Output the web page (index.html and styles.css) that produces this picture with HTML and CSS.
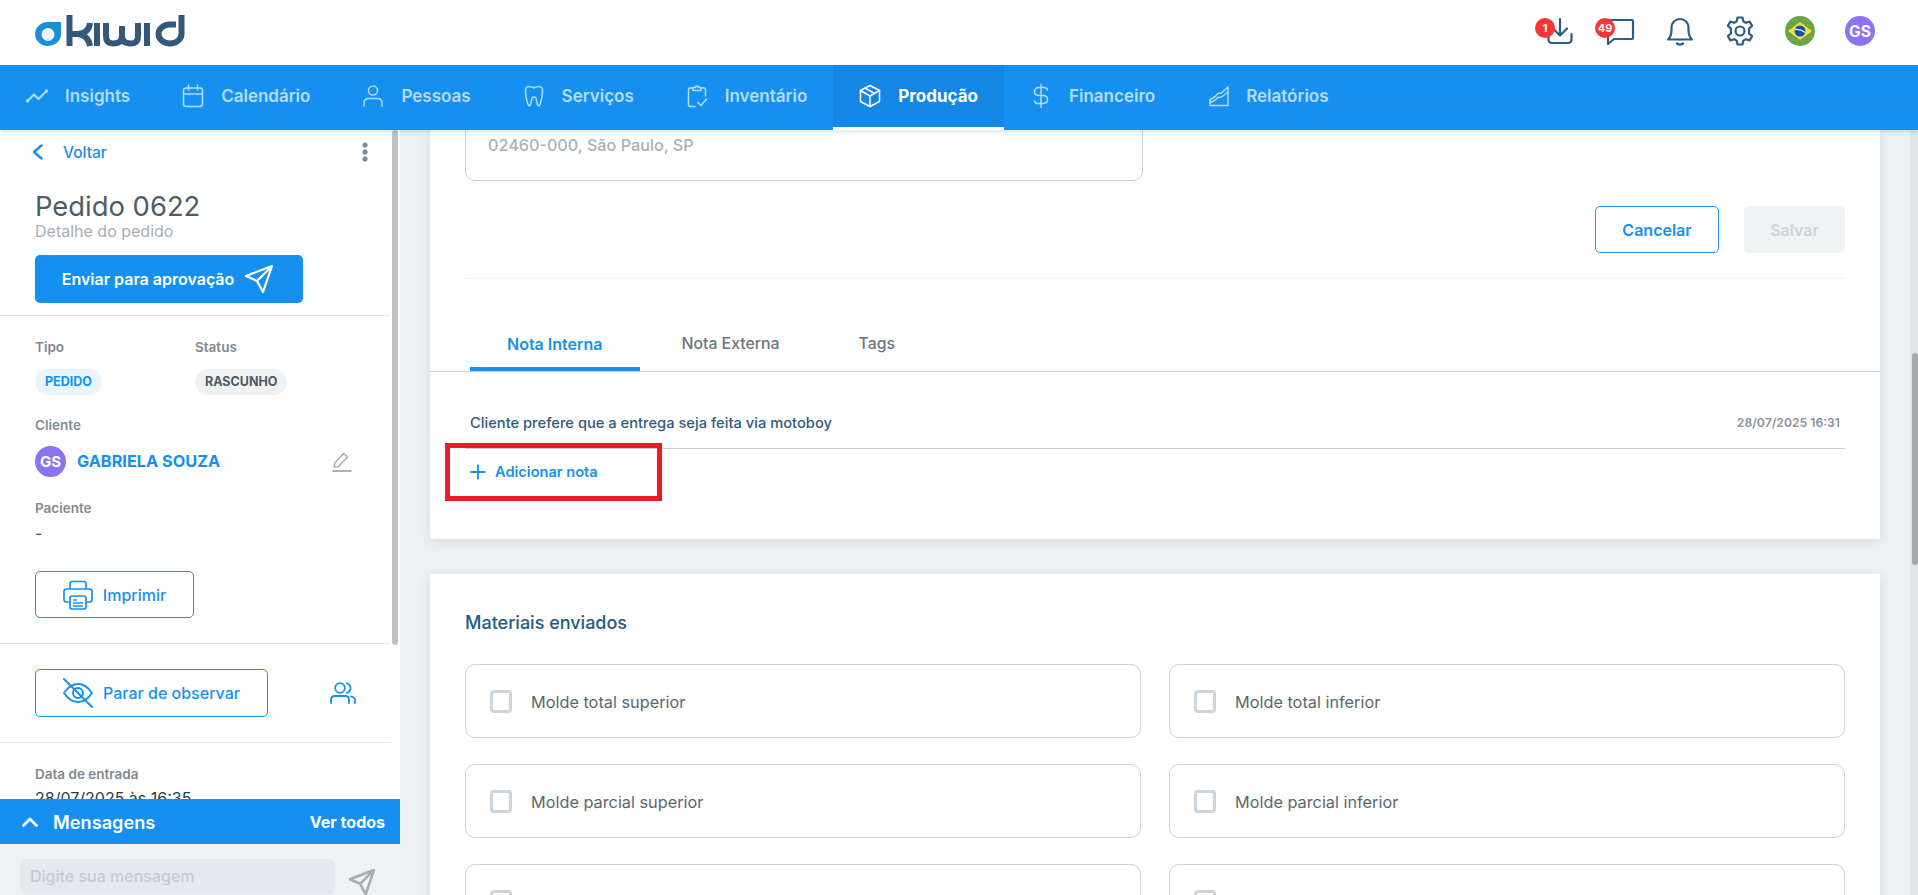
FILE: index.html
```html
<!DOCTYPE html>
<html lang="pt-BR">
<head>
<meta charset="utf-8">
<title>Kiwid - Pedido 0622</title>
<link rel="stylesheet" href="styles.css">
</head>
<body>
<div class="app">
  <header class="topbar">
    <svg class="logo" viewBox="30 12 160 40" width="160" height="40" fill="none">
      <path d="M61 22 V35 A13 12 0 1 1 48 22 Z" fill="#1a8fd6"/>
      <circle cx="48" cy="34.500" r="6.500" fill="#f2f8fd"/>
      <g stroke="#34587a" stroke-width="6" stroke-linecap="butt">
        <path d="M69.500 15 V46"/>
        <path d="M90 23 Q89 33 78 34 H72 M72 34 H78 Q88 35 90 46"/>
        <path d="M97 23 V46"/>
        <path d="M106 23 V36 Q106 43.500 113 43.500 Q122 43.500 122 36 V26 M122 36 Q122 43.500 131 43.500 Q138 43.500 138 36 V23"/>
        <path d="M147 23 V46"/>
        <path d="M181.500 15 V34 A11.500 9.500 0 1 1 170 24.500 H176"/>
      </g>
    </svg>
    <div class="top-actions">
      <div class="top-action">
        <svg viewBox="0 0 30 30" width="30" height="30" fill="none" stroke="#2b5d87" stroke-width="2.200" stroke-linecap="round" stroke-linejoin="round"><path d="M15 3 V19 M8 12.500 L15 19.500 L22 12.500"/><path d="M3.500 18 V23 Q3.500 27 7 27 H23 Q26.500 27 26.500 23 V18"/></svg>
        <span class="badge">1</span>
      </div>
      <div class="top-action">
        <svg viewBox="0 0 30 30" width="30" height="30" fill="none" stroke="#2b5d87" stroke-width="2.200" stroke-linejoin="round"><path d="M6 4 H27 Q28 4 28 5 V22 Q28 23 27 23 H9 L3 28 V6 Q3 4 6 4 Z"/></svg>
        <span class="badge">49</span>
      </div>
      <div class="top-action">
        <svg viewBox="0 0 30 30" width="30" height="30" fill="none" stroke="#2b5d87" stroke-width="2.200" stroke-linecap="round" stroke-linejoin="round"><path d="M3 23.500 H27 Q23.500 20.500 23.500 14 V11.500 A8.500 8.500 0 0 0 6.500 11.500 V14 Q6.500 20.500 3 23.500 Z"/><path d="M12 27.500 Q15 29.500 18 27.500"/></svg>
      </div>
      <div class="top-action">
        <svg viewBox="0 0 30 30" width="30" height="30" fill="none" stroke="#2b5d87" stroke-width="2.200" stroke-linejoin="round"><circle cx="15" cy="15" r="4.500"/><path d="M12.500 1.500 H17.500 L18.300 5.400 L20.800 6.800 L24.600 5.600 L27.100 9.900 L24.100 12.500 V17.500 L27.100 20.100 L24.600 24.400 L20.800 23.200 L18.300 24.600 L17.500 28.500 H12.500 L11.700 24.600 L9.200 23.200 L5.400 24.400 L2.900 20.100 L5.900 17.500 V12.500 L2.900 9.900 L5.400 5.600 L9.200 6.800 L11.700 5.400 Z"/></svg>
      </div>
      <div class="top-action">
        <svg viewBox="0 0 30 30" width="30" height="30"><circle cx="15" cy="15" r="15" fill="#6da544"/><path d="M15 6 L27 15 L15 24 L3 15 Z" fill="#ffda44"/><circle cx="15" cy="15" r="5.500" fill="#0052b4"/><path d="M9.800 13.500 Q15 12.500 20.300 16.500" stroke="#f0f0f0" stroke-width="1.300" fill="none"/></svg>
      </div>
      <div class="top-action">
        <span class="avatar avatar-top">GS</span>
      </div>
    </div>
  </header>

  <nav class="mainnav">
    <a class="nav-item">
      <svg class="nav-icon" viewBox="0 0 24 24"><path class="nav-heavy" d="M2.500 17 L9 10.500 L13.500 15 L21.500 7"/><circle cx="2.500" cy="17" r="1" /><circle cx="21.500" cy="7" r="1"/></svg>
      <span>Insights</span>
    </a>
    <a class="nav-item">
      <svg class="nav-icon" viewBox="0 0 24 24"><rect x="2.500" y="4" width="19" height="18.500" rx="2.500"/><path d="M2.500 10 H21.500 M7.500 1 V6 M16.500 1 V6"/></svg>
      <span>Calendário</span>
    </a>
    <a class="nav-item">
      <svg class="nav-icon" viewBox="0 0 24 24"><circle cx="12" cy="6.500" r="4.500"/><path d="M3 22 V19 Q3 14.500 8 14.500 H16 Q21 14.500 21 19 V22"/></svg>
      <span>Pessoas</span>
    </a>
    <a class="nav-item">
      <svg class="nav-icon" viewBox="0 0 24 24"><path d="M7 2.500 Q9.500 2.500 12 4 Q14.500 2.500 17 2.500 Q21 2.500 20.500 8 Q20 14 18.500 19 Q17.500 22.500 16 21.500 Q15 20.500 14.500 16 Q14 13 12 13 Q10 13 9.500 16 Q9 20.500 8 21.500 Q6.500 22.500 5.500 19 Q4 14 3.500 8 Q3 2.500 7 2.500 Z"/></svg>
      <span>Serviços</span>
    </a>
    <a class="nav-item">
      <svg class="nav-icon" viewBox="0 0 24 24"><path d="M8 4 H5 Q3.500 4 3.500 5.500 V21 Q3.500 22.500 5 22.500 H10 M16 4 H19 Q20.500 4 20.500 5.500 V12"/><path d="M8 6.500 V3.500 H10.500 A1.500 1.500 0 0 1 13.500 3.500 H16 V6.500 Z"/><path d="M13 18.500 L16 21.500 L21.500 15"/></svg>
      <span>Inventário</span>
    </a>
    <a class="nav-item nav-item-active">
      <svg class="nav-icon" viewBox="0 0 24 24"><path d="M12 1.500 L21.500 6.500 V17.500 L12 22.500 L2.500 17.500 V6.500 Z"/><path d="M2.500 6.500 L12 12 L21.500 6.500 M12 12 V22.500 M7 4 L16.500 9.300"/></svg>
      <span>Produção</span>
    </a>
    <a class="nav-item">
      <svg class="nav-icon" viewBox="0 0 24 24"><path d="M12 .5 V24 M18.500 6 Q18 3.500 15 3.500 H10 Q5.500 3.500 5.500 7.500 Q5.500 11.500 10 11.500 H14 Q18.500 11.500 18.500 15.500 Q18.500 19.500 14 19.500 H9 Q6 19.500 5.500 17"/></svg>
      <span>Financeiro</span>
    </a>
    <a class="nav-item">
      <svg class="nav-icon" viewBox="0 0 24 24"><path d="M4 21.500 H22 V3 L15.500 9 L12 9.500 L8.500 13 L4 15.500 Z"/><path d="M4 18.500 L8.500 16.500 L12 13.500 L15.500 13 L22 8"/></svg>
      <span>Relatórios</span>
    </a>
  </nav>

  <div class="workspace">
    <aside class="sidebar">
      <div class="side-scroll">
        <div class="back-row">
          <a class="back-link">
            <svg viewBox="0 0 16 16" width="16" height="16" fill="none" stroke="#1690f0" stroke-width="2.500" stroke-linecap="round" stroke-linejoin="round"><path d="M11.500 1.500 L4 8 L11.500 14.500"/></svg>
            <span>Voltar</span>
          </a>
          <svg viewBox="0 0 6 20" width="6" height="20" fill="#7f8b95"><circle cx="3" cy="3" r="2.600"/><circle cx="3" cy="10" r="2.600"/><circle cx="3" cy="17" r="2.600"/></svg>
        </div>
        <section class="side-section head-section">
          <h1 class="order-title">Pedido 0622</h1>
          <p class="order-sub">Detalhe do pedido</p>
          <button class="btn btn-primary btn-send">
            <span>Enviar para aprovação</span>
            <svg viewBox="0 0 28 28" width="28" height="28" fill="none" stroke="#fff" stroke-width="2.200" stroke-linejoin="round"><path d="M27 1 L1 11 L12 16 L18 27 Z M27 1 L12 16"/></svg>
          </button>
        </section>
        <section class="side-section info-section">
          <div class="two-col">
            <div>
              <div class="field-label">Tipo</div>
              <span class="pill pill-blue">PEDIDO</span>
            </div>
            <div>
              <div class="field-label">Status</div>
              <span class="pill pill-gray">RASCUNHO</span>
            </div>
          </div>
          <div class="field-label label-client">Cliente</div>
          <div class="client-row">
            <span class="avatar avatar-client">GS</span>
            <span class="client-name">GABRIELA SOUZA</span>
            <svg class="client-edit" viewBox="0 0 20 20" width="20" height="20" fill="none" stroke="#a9b1b7" stroke-width="1.600" stroke-linejoin="round"><path d="M2.500 15 V11.500 L11.500 1.500 L15.500 5 L6 15 Z"/><path d="M0.500 19 H19.500" stroke-width="2"/></svg>
          </div>
          <div class="field-label label-patient">Paciente</div>
          <div class="field-value">-</div>
          <button class="btn btn-outline btn-print">
            <svg viewBox="0 0 30 30" width="30" height="30" fill="none" stroke="#1690f0" stroke-width="1.700" stroke-linejoin="round"><path d="M7 9 V3.500 Q7 1.500 9 1.500 H21 Q23 1.500 23 3.500 V9"/><path d="M7 22 H3.500 Q1 22 1 19.500 V11.500 Q1 9 3.500 9 H26.500 Q29 9 29 11.500 V19.500 Q29 22 26.500 22 H23"/><rect x="7" y="16" width="16" height="13" rx="2"/><path d="M10 20 H14 M10 23 H20 M10 26 H20" stroke-width="1.300"/></svg>
            <span>Imprimir</span>
          </button>
        </section>
        <section class="side-section follow-section">
          <button class="btn btn-outline btn-follow">
            <svg viewBox="0 0 30 30" width="30" height="30" fill="none" stroke="#1690f0" stroke-width="1.900" stroke-linecap="round" stroke-linejoin="round"><path d="M1 15 Q7 6 15 6 Q23 6 29 15 Q23 24 15 24 Q7 24 1 15 Z"/><circle cx="15" cy="15" r="5"/><path d="M1 1 L29 29"/></svg>
            <span>Parar de observar</span>
          </button>
          <svg class="users-icon" viewBox="0 0 26 22" width="26" height="22" fill="none" stroke="#1690f0" stroke-width="1.800" stroke-linecap="round"><circle cx="10" cy="6" r="4.800"/><path d="M1 21 V18 Q1 14 5 14 H15 Q19 14 19 18 V21"/><path d="M17 1.300 Q20.500 2.500 20.500 6 Q20.500 9.500 17 10.800"/><path d="M21 14.300 Q25 15 25 18.500 V21"/></svg>
        </section>
        <section class="dates-section">
          <div class="field-label">Data de entrada</div>
          <div class="date-value">28/07/2025 às 16:35</div>
        </section>
        <div class="thumb thumb-side"></div>
      </div>
      <div class="messages-bar">
        <div class="messages-title">
          <svg viewBox="0 0 16 10" width="16" height="10" fill="none" stroke="#fff" stroke-width="2.600" stroke-linecap="round" stroke-linejoin="round"><path d="M1.500 8.500 L8 2 L14.500 8.500"/></svg>
          <span>Mensagens</span>
        </div>
        <span class="messages-all">Ver todos</span>
      </div>
      <div class="composer">
        <div class="composer-input">Digite sua mensagem</div>
        <svg class="composer-send" viewBox="0 0 28 28" width="26" height="26" fill="none" stroke="#a5adb3" stroke-width="2.800" stroke-linejoin="round"><path d="M27 1 L1 11 L12 16 L18 27 Z M27 1 L12 16"/></svg>
      </div>
    </aside>

    <main class="content">
      <section class="card card-notes">
        <div class="address-box">02460-000, São Paulo, SP</div>
        <div class="form-actions">
          <button class="btn btn-outline btn-cancel">Cancelar</button>
          <button class="btn btn-disabled">Salvar</button>
        </div>
        <div class="form-divider"></div>
        <div class="tabs">
          <a class="tab tab-active">Nota Interna</a>
          <a class="tab">Nota Externa</a>
          <a class="tab">Tags</a>
        </div>
        <div class="note-row">
          <span class="note-text">Cliente prefere que a entrega seja feita via motoboy</span>
          <span class="note-date">28/07/2025 16:31</span>
        </div>
        <a class="add-note">
          <svg viewBox="0 0 16 16" width="16" height="16" fill="none" stroke="#1690f0" stroke-width="1.800"><path d="M8 .5 V15.500 M.5 8 H15.500"/></svg>
          <span>Adicionar nota</span>
        </a>
        <div class="highlight"></div>
      </section>

      <section class="card card-materials">
        <h2 class="card-title">Materiais enviados</h2>
        <div class="materials-grid">
          <label class="material"><span class="check"></span><span class="material-text">Molde total superior</span></label>
          <label class="material"><span class="check"></span><span class="material-text">Molde total inferior</span></label>
          <label class="material"><span class="check"></span><span class="material-text">Molde parcial superior</span></label>
          <label class="material"><span class="check"></span><span class="material-text">Molde parcial inferior</span></label>
          <label class="material"><span class="check"></span></label>
          <label class="material"><span class="check"></span></label>
        </div>
      </section>
      <div class="track"><div class="thumb thumb-main"></div></div>
    </main>
  </div>
</div>
</body>
</html>
```
FILE: styles.css
```css
* { box-sizing: border-box; }
html, body { margin: 0; height: 100%; overflow: hidden; }
body { font-family: Inter, "Noto Sans", sans-serif; color: #4f5b64; background: #eef1f3; }
h1, h2, p { margin: 0; font-weight: 400; }
button { font-family: inherit; cursor: pointer; }

.app { display: flex; flex-direction: column; height: 895px; }

/* Top bar */
.topbar { height: 65px; flex: none; background: #fff; display: flex; justify-content: space-between; padding: 12px 28px 0 30px; }
.logo { display: block; }
.top-actions { display: flex; padding-top: 4px; }
.top-action { position: relative; width: 60px; height: 30px; display: flex; justify-content: center; }
.badge { position: absolute; left: 5px; top: 2px; width: 20px; height: 20px; border-radius: 50%; background: #f93437; color: #fff; font-size: 11px; font-weight: 700; line-height: 20px; text-align: center; }
.avatar { display: flex; align-items: center; justify-content: center; border-radius: 50%; background: #8b74f2; color: #fff; font-weight: 700; }
.avatar-top { width: 30px; height: 30px; font-size: 15.500px; }

/* Main navigation */
.mainnav { height: 65px; flex: none; background: #1690f0; display: flex; position: relative; z-index: 2; box-shadow: 0 2px 4px rgba(0, 0, 0, .12); }
.nav-item { display: flex; align-items: center; gap: 16px; padding: 0 26px 0 25px; border-bottom: 3px solid transparent; color: #b4dcfd; font-size: 17px; font-weight: 600; }
.nav-item-active { background: #1487e4; border-bottom-color: #fff; color: #fff; font-weight: 700; }
.nav-icon { width: 24px; height: 24px; fill: none; stroke: currentColor; stroke-width: 1.500; stroke-linecap: round; stroke-linejoin: round; flex: none; }
.nav-heavy { stroke-width: 2; }

.workspace { flex: 1; display: flex; min-height: 0; }

/* Sidebar */
.sidebar { width: 400px; flex: none; background: #fff; display: flex; flex-direction: column; }
.side-scroll { flex: 1; min-height: 0; overflow: hidden; position: relative; }
.thumb { position: absolute; background: #c1c1c1; border-radius: 3px; }
.thumb-side { left: 392px; top: 0; width: 6px; height: 515px; }
.back-row { display: flex; justify-content: space-between; align-items: center; height: 24px; margin-top: 10px; padding: 0 32px 0 30px; }
.back-link { display: flex; align-items: center; gap: 17px; color: #1690f0; font-size: 15.500px; font-weight: 500; }
.side-section { width: 390px; padding-left: 35px; border-bottom: 1px solid #e3e6e8; }
.head-section { padding-top: 26px; padding-bottom: 12px; }
.order-title { font-size: 27.400px; line-height: 33px; color: #4f5b64; }
.order-sub { font-size: 16px; line-height: 18px; margin-top: -1px; color: #a9aeb3; }
.btn { border-radius: 5px; font-size: 16px; font-weight: 600; display: flex; align-items: center; justify-content: center; border: 0; padding: 0; }
.btn-primary { background: #1690f0; color: #fff; }
.btn-send { width: 268px; height: 48px; margin-top: 15px; gap: 11px; padding-right: 3px; }
.btn-outline { background: #fff; border: 1px solid #1690f0; color: #1690f0; font-weight: 500; }
.btn-disabled { width: 101px; height: 47px; background: #f0f3f4; color: #ccd3d8; }

.info-section { padding-top: 22px; padding-bottom: 25px; }
.two-col { display: flex; }
.two-col > div { width: 160px; }
.field-label { font-size: 13.500px; line-height: 18px; font-weight: 600; color: #808a91; }
.pill { display: inline-block; height: 26px; margin-top: 13px; padding: 0 10px; border-radius: 13px; font-size: 12.500px; line-height: 26px; font-weight: 700; vertical-align: top; }
.pill-blue { background: #e9f5fe; color: #1690f0; }
.pill-gray { background: #eff2f4; color: #4f5b64; }
.label-client { margin-top: 21px; }
.client-row { display: flex; align-items: center; margin-top: 12px; height: 31px; }
.avatar-client { width: 31px; height: 31px; font-size: 15px; flex: none; }
.client-name { margin-left: 11px; margin-top: -2px; font-size: 16.300px; font-weight: 700; color: #1690f0; }
.client-edit { margin-left: auto; margin-right: 38px; }
.label-patient { margin-top: 22px; }
.field-value { margin-top: 6px; font-size: 16px; line-height: 20px; color: #4f5b64; }
.btn-print { width: 159px; height: 47px; margin-top: 28px; gap: 10px; }

.follow-section { display: flex; align-items: center; padding-top: 25px; padding-bottom: 25px; }
.btn-follow { width: 233px; height: 48px; gap: 10px; }
.users-icon { margin-left: 62px; }
.dates-section { padding: 22px 0 0 35px; }
.date-value { margin-top: 5px; font-size: 16px; line-height: 20px; color: #2f3a42; }

.messages-bar { height: 45px; flex: none; background: #1690f0; display: flex; align-items: center; justify-content: space-between; padding: 0 15px 0 22px; color: #fff; }
.messages-title { display: flex; align-items: center; gap: 15px; font-size: 18.200px; font-weight: 600; }
.messages-all { font-size: 16px; font-weight: 700; }
.composer { height: 51px; flex: none; background: #eff2f4; display: flex; padding: 15px 25px 0 20px; overflow: hidden; justify-content: space-between; }
.composer-input { width: 315px; height: 35px; padding-left: 10px; border-radius: 5px; background: #e5e9ed; color: #c5cad0; font-size: 16px; font-weight: 500; line-height: 35px; }
.composer-send { margin-top: 10px; flex: none; }

/* Main content */
.content { flex: 1; min-width: 0; position: relative; overflow: hidden; padding: 0 38px 0 30px; }
.track { position: absolute; right: 0; top: 0; bottom: 0; width: 8px; background: #e1e5e7; }
.thumb-main { left: 2px; top: 223px; width: 6px; height: 212px; background: #a8a8a8; }
.card { background: #fff; padding: 0 35px; box-shadow: 0 2px 10px rgba(60, 80, 100, .14); }
.card-notes { position: relative; height: 409px; display: flow-root; }
.address-box { height: 71px; margin-top: -20px; padding: 22px 0 0 22px; border: 1px solid #c8d0d6; border-radius: 10px; width: 678px; font-size: 16.200px; line-height: 24px; font-weight: 500; color: #a9b2b9; }
.form-actions { display: flex; justify-content: flex-end; gap: 25px; margin-top: 25px; }
.btn-cancel { width: 124px; height: 47px; font-weight: 600; border-color: #1e96f5; }
.form-divider { height: 1px; margin-top: 25px; background: #f0f2f3; }
.tabs { display: flex; gap: 5px; margin: 37px -35px 0; padding-left: 40px; border-bottom: 1px solid #c9cfd4; }
.tab { padding: 16px 37px 11px; line-height: 24px; font-size: 15.800px; font-weight: 500; color: #6c757d; border-bottom: 4px solid transparent; }
.tab-active { color: #1690f0; font-weight: 600; border-bottom-color: #1690f0; font-size: 16px; }
.note-row { display: flex; justify-content: space-between; align-items: center; height: 77px; padding: 26px 5px 0; border-bottom: 1px solid #c9cfd4; }
.note-text { font-size: 14.700px; font-weight: 500; color: #2f5a82; }
.note-date { font-size: 12.200px; font-weight: 600; color: #8b9299; margin-top: -2px; }
.add-note { display: flex; align-items: center; gap: 9px; height: 24px; margin-top: 11px; padding-left: 5px; color: #1690f0; font-size: 14.600px; font-weight: 600; }
.highlight { position: absolute; left: 15px; top: 313px; width: 217px; height: 58px; border: 5px solid #ee1c25; }

.card-materials { margin-top: 35px; padding-top: 37px; height: 600px; }
.card-title { font-size: 18px; line-height: 24px; font-weight: 500; color: #235a85; }
.materials-grid { display: grid; grid-template-columns: 676px 676px; gap: 26px 28px; margin-top: 29px; }
.material { display: flex; align-items: center; gap: 19px; height: 74px; padding-left: 24px; border: 1px solid #c9d2d9; border-radius: 10px; font-size: 16.300px; font-weight: 400; color: #5c666d; }
.material-text { padding-top: 2px; }
.check { width: 22px; height: 23px; border: 3px solid #ccd5db; border-radius: 4px; flex: none; }
```
